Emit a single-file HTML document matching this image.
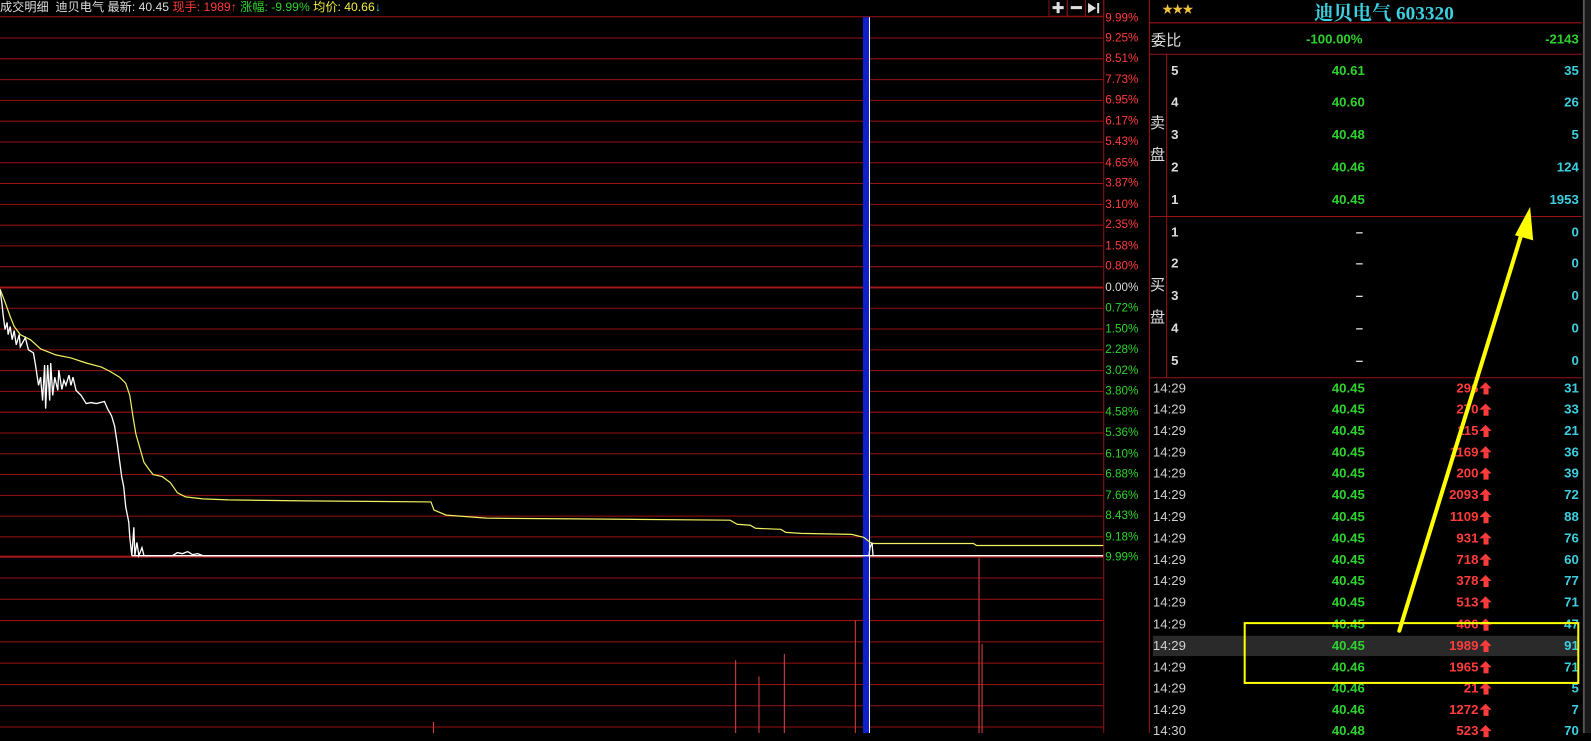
<!DOCTYPE html>
<html><head><meta charset="utf-8"><style>
html,body{margin:0;padding:0;background:#000;width:1591px;height:733px;overflow:hidden}
#w{position:absolute;left:0;top:0;width:1569px;height:723px;transform:scale(1.014);transform-origin:0 0;font-family:"Liberation Sans","Noto Sans CJK SC",sans-serif}
.a{position:absolute;white-space:nowrap}
.ax{position:absolute;left:1090px;font-size:11.5px;line-height:12px}
.r{color:#ff3c3c}.g{color:#2ed22e}.c{color:#3ccfe0}.w{color:#dcdcdc}.y{color:#f0f040}
.row{position:absolute;left:1137px;width:420px;height:20px;font-size:13px;font-weight:bold;line-height:20px}
.row span{position:absolute}
.t{left:0;color:#cfcfcf;font-weight:normal}
.p{right:211px;color:#2ed22e}
.v{right:99px;color:#ff3c3c}
.ar{right:86px;top:4px;width:0;height:0;border-left:6px solid transparent;border-right:6px solid transparent;border-bottom:6px solid #ff3c3c}
.ar:after{content:"";position:absolute;left:-2.5px;top:6px;width:5px;height:6px;background:#ff3c3c}
.n{right:0;color:#3ccfe0}
.q{position:absolute;left:1137px;width:420px;height:20px;font-size:13px;font-weight:bold;line-height:20px}
.q span{position:absolute}
</style></head><body><div id="w">
<svg class="a" style="left:0;top:0" width="1569" height="723">
<g stroke="#9a1212" stroke-width="1">
<line x1="0" y1="16.5" x2="1088" y2="16.5"/>
<line x1="0" y1="37.5" x2="1088" y2="37.5"/><line x1="0" y1="58" x2="1088" y2="58"/><line x1="0" y1="78.5" x2="1088" y2="78.5"/><line x1="0" y1="99" x2="1088" y2="99"/><line x1="0" y1="119.5" x2="1088" y2="119.5"/><line x1="0" y1="140" x2="1088" y2="140"/><line x1="0" y1="160.5" x2="1088" y2="160.5"/><line x1="0" y1="181" x2="1088" y2="181"/><line x1="0" y1="201.5" x2="1088" y2="201.5"/><line x1="0" y1="222" x2="1088" y2="222"/><line x1="0" y1="242.5" x2="1088" y2="242.5"/><line x1="0" y1="263" x2="1088" y2="263"/>
<line x1="0" y1="304" x2="1088" y2="304"/><line x1="0" y1="324.5" x2="1088" y2="324.5"/><line x1="0" y1="345" x2="1088" y2="345"/><line x1="0" y1="365.5" x2="1088" y2="365.5"/><line x1="0" y1="386" x2="1088" y2="386"/><line x1="0" y1="406.5" x2="1088" y2="406.5"/><line x1="0" y1="427" x2="1088" y2="427"/><line x1="0" y1="447.5" x2="1088" y2="447.5"/><line x1="0" y1="468" x2="1088" y2="468"/><line x1="0" y1="488.5" x2="1088" y2="488.5"/><line x1="0" y1="509" x2="1088" y2="509"/><line x1="0" y1="529.5" x2="1088" y2="529.5"/>
<line x1="0" y1="570" x2="1088" y2="570"/><line x1="0" y1="591" x2="1088" y2="591"/><line x1="0" y1="612" x2="1088" y2="612"/><line x1="0" y1="633" x2="1088" y2="633"/><line x1="0" y1="654" x2="1088" y2="654"/><line x1="0" y1="675" x2="1088" y2="675"/><line x1="0" y1="696" x2="1088" y2="696"/><line x1="0" y1="717" x2="1088" y2="717"/>
<line x1="1088.5" y1="0" x2="1088.5" y2="723"/>
<line x1="1133.5" y1="0" x2="1133.5" y2="723"/>
<line x1="1133" y1="22.5" x2="1560" y2="22.5"/>
<line x1="1133" y1="53.5" x2="1560" y2="53.5"/>
<line x1="1133" y1="213.5" x2="1560" y2="213.5"/>
<line x1="1133" y1="372.5" x2="1560" y2="372.5"/>
<line x1="1150.5" y1="53" x2="1150.5" y2="372"/>
</g>
<line x1="0" y1="283.5" x2="1088" y2="283.5" stroke="#a01818" stroke-width="2"/>
<line x1="0" y1="549" x2="1088" y2="549" stroke="#a01818" stroke-width="2"/>
<line x1="130" y1="548" x2="1088" y2="548" stroke="#fff" stroke-width="1.3"/>
<g stroke="#8a1010" fill="none"><rect x="1034.5" y="-1" width="18" height="17"/><rect x="1052.5" y="-1" width="18" height="17"/><rect x="1070.5" y="-1" width="18" height="17"/></g>
<g fill="#ddd"><rect x="1038" y="6" width="11" height="3"/><rect x="1042" y="2" width="3" height="11"/><rect x="1056" y="6" width="11" height="3"/><polygon points="1073,3 1081,8 1073,13"/><rect x="1074" y="6.5" width="4" height="3" /><rect x="1082" y="3" width="2" height="10"/></g>
<rect x="851" y="17" width="7" height="706" fill="#1020c8"/>
<line x1="857.5" y1="17" x2="857.5" y2="723" stroke="#fff"/>
<g stroke="#e04040" stroke-width="1">
<line x1="427.5" y1="712" x2="427.5" y2="723"/><line x1="725.5" y1="651" x2="725.5" y2="723"/><line x1="748.5" y1="667" x2="748.5" y2="723"/><line x1="773.5" y1="645" x2="773.5" y2="723"/><line x1="843.5" y1="612" x2="843.5" y2="723"/><line x1="965.5" y1="550" x2="965.5" y2="723"/><line x1="968.5" y1="635" x2="968.5" y2="723"/>
</g>
<polyline fill="none" stroke="#f0f060" stroke-width="1.2" points="0,285 5,298 10,312 14,322 20,330 30,335 40,344 55,350 70,353 85,358 100,362 108,366 118,372 124,378 128,390 131,410 134,428 138,442 142,456 147,463 151,468 160,470 168,476 175,486 183,490 200,492 225,493 300,494 425,495 428,503 440,508 480,511 600,512 720,513 727,517 740,518 745,521 770,522 775,525 790,526 840,527 852,530 857,534 860,536 960,536 963,538 1088,538"/>
<polyline fill="none" stroke="#fff" stroke-width="1.3" points="0,286 2,300 3,310 5,325 7,318 8,330 10,322 12,335 14,326 16,340 19,330 20,342 25,333 28,345 33,348 35,360 38,380 40,372 42,395 44,360 45,403 47,360 49,395 50,358 52,390 54,372 57,385 58,365 61,384 63,375 65,380 68,370 70,380 72,372 75,385 80,390 85,398 90,397 95,398 103,396 106,403 110,410 113,420 116,440 118,455 120,470 122,480 124,500 127,515 128,530 130,548 132,520 133,548 135,535 137,548 140,540 142,548 170,548 175,545 180,546 185,544 190,547 195,546 200,548 857,548 858,540 860,535 861,548"/>
<rect x="1561" y="0" width="2" height="723" fill="#555"/>
<rect x="1563" y="0" width="6" height="723" fill="#1a1a1a"/>
</svg>

<div class="a" style="left:0;top:0;font-size:12px;line-height:15px"><span class="w">成交明细</span>&nbsp;&nbsp;<span class="w">迪贝电气 最新: 40.45</span> <span class="r">现手: 1989↑</span> <span class="g">涨幅: -9.99%</span> <span class="y">均价: 40.66</span><span class="c">↓</span></div>

<div class="ax r" style="top:12px">9.99%</div><div class="ax r" style="top:32px">9.25%</div><div class="ax r" style="top:52px">8.51%</div><div class="ax r" style="top:73px">7.73%</div><div class="ax r" style="top:93px">6.95%</div><div class="ax r" style="top:114px">6.17%</div><div class="ax r" style="top:134px">5.43%</div><div class="ax r" style="top:155px">4.65%</div><div class="ax r" style="top:175px">3.87%</div><div class="ax r" style="top:196px">3.10%</div><div class="ax r" style="top:216px">2.35%</div><div class="ax r" style="top:237px">1.58%</div><div class="ax r" style="top:257px">0.80%</div>
<div class="ax w" style="top:278px">0.00%</div>
<div class="ax g" style="top:298px">0.72%</div><div class="ax g" style="top:319px">1.50%</div><div class="ax g" style="top:339px">2.28%</div><div class="ax g" style="top:360px">3.02%</div><div class="ax g" style="top:380px">3.80%</div><div class="ax g" style="top:401px">4.58%</div><div class="ax g" style="top:421px">5.36%</div><div class="ax g" style="top:442px">6.10%</div><div class="ax g" style="top:462px">6.88%</div><div class="ax g" style="top:483px">7.66%</div><div class="ax g" style="top:503px">8.43%</div><div class="ax g" style="top:524px">9.18%</div><div class="ax g" style="top:544px">9.99%</div>

<div class="a" style="left:1146px;top:1px;font-size:11px;color:#f0c040;letter-spacing:-1px">★★★</div>
<div class="a c" style="left:1296px;top:-2px;font-size:19px;font-weight:bold;font-family:'Liberation Serif','Noto Serif CJK SC',serif">迪贝电气 603320</div>
<div class="a w" style="left:1135px;top:29px;font-size:15px">委比</div>
<div class="a g" style="left:1288px;top:31px;font-size:13px;font-weight:bold">-100.00%</div>
<div class="a g" style="right:12px;top:31px;font-size:13px;font-weight:bold">-2143</div>
<div class="a w" style="left:1134px;top:106px;font-size:15px;line-height:32px">卖<br>盘</div>
<div class="a w" style="left:1134px;top:266px;font-size:15px;line-height:32px">买<br>盘</div>

<div class="q" style="top:60px"><span class="w" style="left:18px">5</span><span style="right:211px;color:#2ed22e">40.61</span><span class="c" style="right:0">35</span></div>
<div class="q" style="top:91px"><span class="w" style="left:18px">4</span><span style="right:211px;color:#2ed22e">40.60</span><span class="c" style="right:0">26</span></div>
<div class="q" style="top:123px"><span class="w" style="left:18px">3</span><span style="right:211px;color:#2ed22e">40.48</span><span class="c" style="right:0">5</span></div>
<div class="q" style="top:155px"><span class="w" style="left:18px">2</span><span style="right:211px;color:#2ed22e">40.46</span><span class="c" style="right:0">124</span></div>
<div class="q" style="top:187px"><span class="w" style="left:18px">1</span><span style="right:211px;color:#2ed22e">40.45</span><span class="c" style="right:0">1953</span></div>
<div class="q" style="top:219px"><span class="w" style="left:18px">1</span><span class="w" style="left:200px">–</span><span class="c" style="right:0">0</span></div>
<div class="q" style="top:250px"><span class="w" style="left:18px">2</span><span class="w" style="left:200px">–</span><span class="c" style="right:0">0</span></div>
<div class="q" style="top:282px"><span class="w" style="left:18px">3</span><span class="w" style="left:200px">–</span><span class="c" style="right:0">0</span></div>
<div class="q" style="top:314px"><span class="w" style="left:18px">4</span><span class="w" style="left:200px">–</span><span class="c" style="right:0">0</span></div>
<div class="q" style="top:346px"><span class="w" style="left:18px">5</span><span class="w" style="left:200px">–</span><span class="c" style="right:0">0</span></div>

<div class="row" style="top:373px"><span class="t">14:29</span><span class="p">40.45</span><span class="v">296</span><span class="ar"></span><span class="n">31</span></div>
<div class="row" style="top:394px"><span class="t">14:29</span><span class="p">40.45</span><span class="v">270</span><span class="ar"></span><span class="n">33</span></div>
<div class="row" style="top:415px"><span class="t">14:29</span><span class="p">40.45</span><span class="v">115</span><span class="ar"></span><span class="n">21</span></div>
<div class="row" style="top:436px"><span class="t">14:29</span><span class="p">40.45</span><span class="v">1169</span><span class="ar"></span><span class="n">36</span></div>
<div class="row" style="top:457px"><span class="t">14:29</span><span class="p">40.45</span><span class="v">200</span><span class="ar"></span><span class="n">39</span></div>
<div class="row" style="top:478px"><span class="t">14:29</span><span class="p">40.45</span><span class="v">2093</span><span class="ar"></span><span class="n">72</span></div>
<div class="row" style="top:500px"><span class="t">14:29</span><span class="p">40.45</span><span class="v">1109</span><span class="ar"></span><span class="n">88</span></div>
<div class="row" style="top:521px"><span class="t">14:29</span><span class="p">40.45</span><span class="v">931</span><span class="ar"></span><span class="n">76</span></div>
<div class="row" style="top:542px"><span class="t">14:29</span><span class="p">40.45</span><span class="v">718</span><span class="ar"></span><span class="n">60</span></div>
<div class="row" style="top:563px"><span class="t">14:29</span><span class="p">40.45</span><span class="v">378</span><span class="ar"></span><span class="n">77</span></div>
<div class="row" style="top:584px"><span class="t">14:29</span><span class="p">40.45</span><span class="v">513</span><span class="ar"></span><span class="n">71</span></div>
<div class="row" style="top:606px"><span class="t">14:29</span><span class="p">40.45</span><span class="v">406</span><span class="ar"></span><span class="n">47</span></div>
<div class="row" style="top:627px;background:#2a2a2a"><span class="t">14:29</span><span class="p">40.45</span><span class="v">1989</span><span class="ar"></span><span class="n">91</span></div>
<div class="row" style="top:648px"><span class="t">14:29</span><span class="p">40.46</span><span class="v">1965</span><span class="ar"></span><span class="n">71</span></div>
<div class="row" style="top:669px"><span class="t">14:29</span><span class="p">40.46</span><span class="v">21</span><span class="ar"></span><span class="n">5</span></div>
<div class="row" style="top:690px"><span class="t">14:29</span><span class="p">40.46</span><span class="v">1272</span><span class="ar"></span><span class="n">7</span></div>
<div class="row" style="top:711px"><span class="t">14:30</span><span class="p">40.48</span><span class="v">523</span><span class="ar"></span><span class="n">70</span></div>

<svg class="a" style="left:0;top:0;pointer-events:none" width="1569" height="723">
<rect x="1227.5" y="614.5" width="329" height="59" stroke="#ffff00" stroke-width="2" fill="none"/>
<line x1="1380" y1="622" x2="1502" y2="226" stroke="#ffff00" stroke-width="4" stroke-linecap="round"/>
<polygon points="1494,232 1512,237 1509,204" fill="#ffff00"/>
</svg>
</div></body></html>
